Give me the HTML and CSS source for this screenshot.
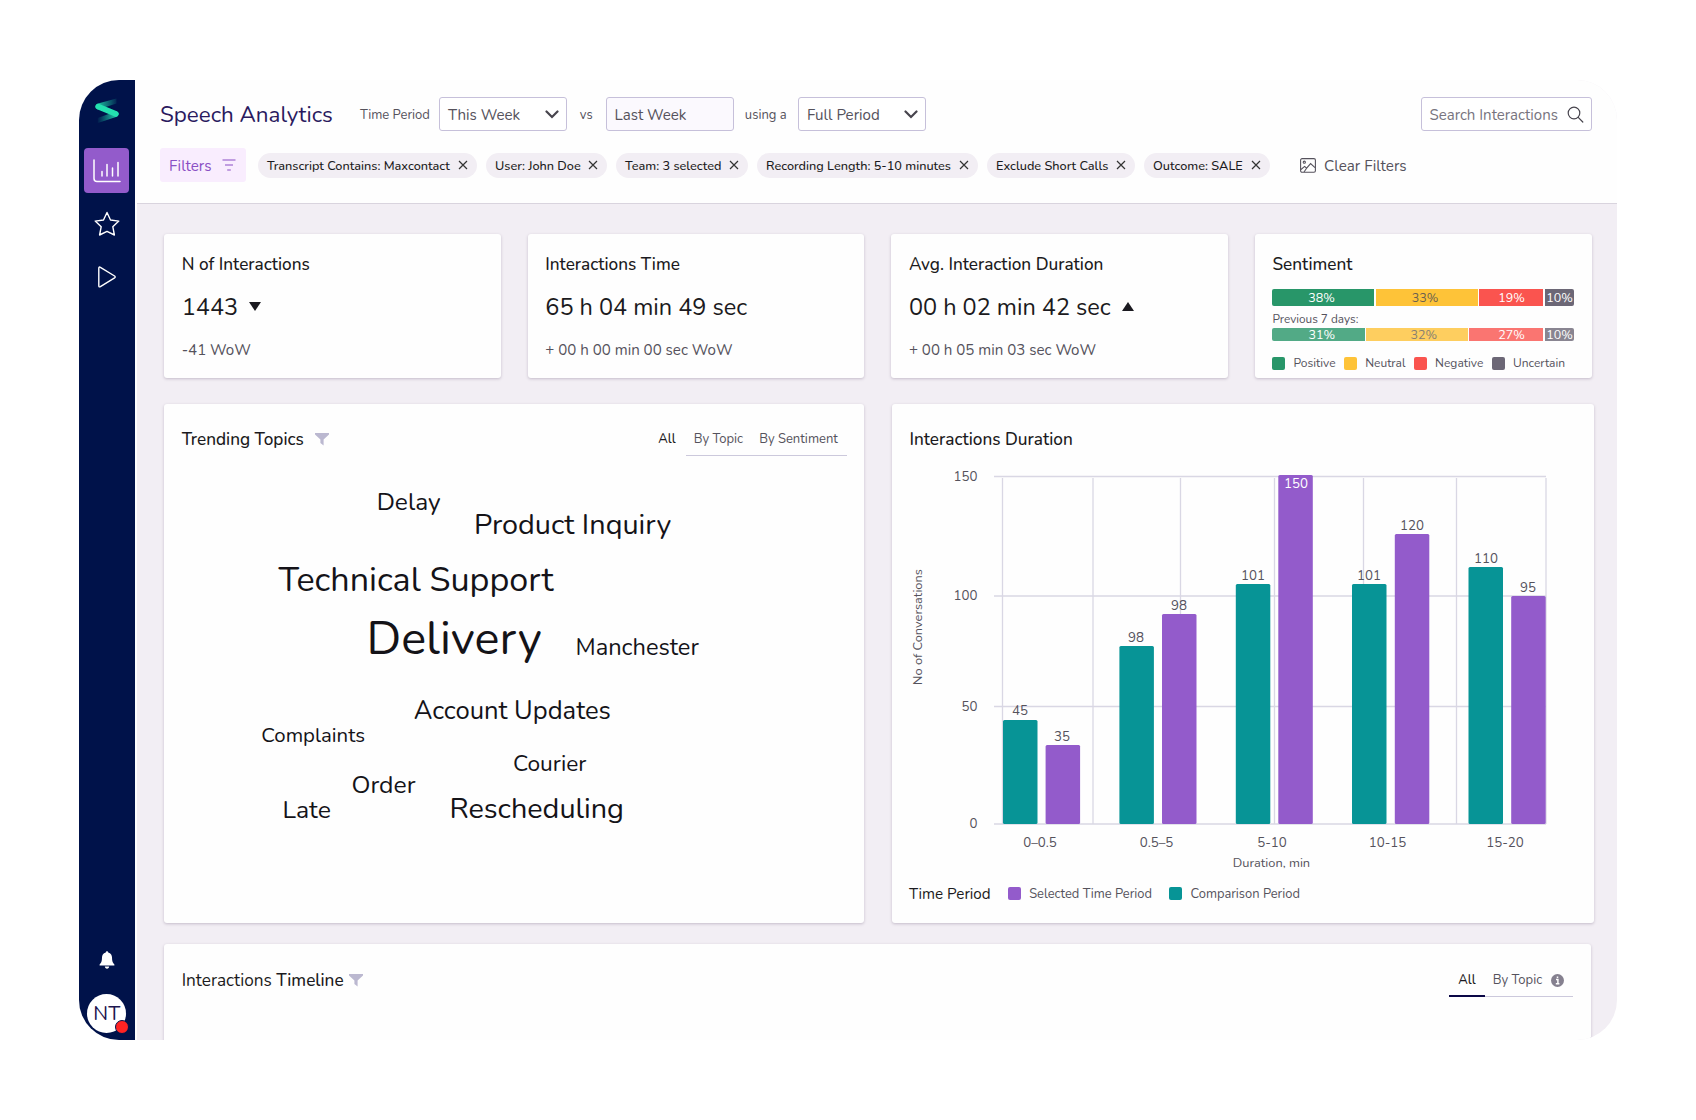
FILE: index.html
```
<!DOCTYPE html>
<html lang="en">
<head>
    <meta charset="UTF-8">
    <meta name="viewport" content="width=device-width, initial-scale=1.0">
    <title>Speech Analytics</title>
    <link rel="stylesheet" href="styles.css">
</head>
<body>

<div class="app">

    <nav class="sidebar">
        <svg class="logo" width="24" height="26" viewBox="0 0 24 26">
            <defs>
                <linearGradient id="g1" x1="0" y1="0" x2="1" y2="0">
                    <stop offset="0" stop-color="#1fd3a8"/>
                    <stop offset="1" stop-color="#1fd3a8" stop-opacity="0.1"/>
                </linearGradient>
                <linearGradient id="g2" x1="0" y1="0" x2="1" y2="0">
                    <stop offset="0" stop-color="#1fd3a8" stop-opacity="0.05"/>
                    <stop offset="1" stop-color="#22dcb0"/>
                </linearGradient>
            </defs>
            <path d="M3 5.5 L21.5 0.5 L21.5 5.5 L3 11.5 C-0.3 10.5 -0.3 6.5 3 5.5Z" fill="url(#g1)"/>
            <path d="M2.8 20 L21 13.2 C24.5 14.2 24.5 18 21 19 L2.8 25Z" fill="url(#g2)"/>
            <path d="M3.2 8.6 L20.8 15.8" stroke="#24e0b0" stroke-width="5.6" stroke-linecap="round"/>
        </svg>

        <a class="nav-item active">
            <svg width="28" height="24" viewBox="0 0 28 24" fill="none" stroke="#fff" stroke-linecap="round">
                <path d="M1 1V19.5Q1 22.5 4 22.5H27" stroke-width="1.5"/>
                <path d="M9 12.5V17M14 5.5V17M19.5 9V17M25 3.5V17" stroke-width="1.5"/>
            </svg>
        </a>
        <a class="nav-item">
            <svg width="26" height="26" viewBox="0 0 26 26" fill="none" stroke="#fff" stroke-width="1.4" stroke-linejoin="round">
                <path d="M13 1.5L16.5 9L24.8 10.1L18.8 15.7L20.4 24L13 20.4L5.6 24L7.2 15.7L1.2 10.1L9.5 9Z"/>
            </svg>
        </a>
        <a class="nav-item">
            <svg width="20" height="24" viewBox="0 0 20 24" fill="none" stroke="#fff" stroke-width="1.4" stroke-linejoin="round">
                <path d="M1.8 3.2Q1.8 1.4 3.4 2.3L17.6 11Q18.8 12 17.6 12.8L3.4 21.6Q1.8 22.4 1.8 20.8Z"/>
            </svg>
        </a>

        <div class="sidebar-bottom">
            <svg width="16" height="18" viewBox="0 0 16 18" fill="#fff">
                <path d="M8 0.3C8.9 0.3 9.2 1 9.2 1.6C12 2.2 13 4.4 13 6.6C13 10.5 13.9 12.2 15.4 13.4V14.6H0.6V13.4C2.1 12.2 3 10.5 3 6.6C3 4.4 4 2.2 6.8 1.6C6.8 1 7.1 0.3 8 0.3Z"/>
                <path d="M5.8 15.6H10.2C10 17 9.2 17.7 8 17.7C6.8 17.7 6 17 5.8 15.6Z"/>
            </svg>
            <div class="avatar">NT<span class="status"></span></div>
        </div>
    </nav>

    <div class="main">

        <header class="header">
            <div class="period-row">
                <h1>Speech Analytics</h1>
                <span class="label">Time Period</span>
                <div class="select">This Week
                    <svg width="14" height="9" viewBox="0 0 14 9"><path d="M1.5 1.5L7 7L12.5 1.5"/></svg>
                </div>
                <span class="label center">vs</span>
                <div class="select disabled">Last Week</div>
                <span class="label center">using a</span>
                <div class="select">Full Period
                    <svg width="14" height="9" viewBox="0 0 14 9"><path d="M1.5 1.5L7 7L12.5 1.5"/></svg>
                </div>
                <div class="select search">Search Interactions
                    <svg width="17" height="17" viewBox="0 0 17 17"><circle cx="7" cy="7" r="5.8"/><path d="M11.2 11.4L15.8 16"/></svg>
                </div>
            </div>

            <div class="filter-row">
                <div class="filters-btn">Filters
                    <svg width="14" height="12" viewBox="0 0 14 12"><path d="M0.5 1H13.5M3 6H11M5.2 11H8.8"/></svg>
                </div>
                <div class="chip c1"><span>Transcript Contains: Maxcontact</span><svg width="10" height="10" viewBox="0 0 10 10"><path d="M1 1L9 9M9 1L1 9"/></svg></div>
                <div class="chip c2"><span>User: John Doe</span><svg width="10" height="10" viewBox="0 0 10 10"><path d="M1 1L9 9M9 1L1 9"/></svg></div>
                <div class="chip c3"><span>Team: 3 selected</span><svg width="10" height="10" viewBox="0 0 10 10"><path d="M1 1L9 9M9 1L1 9"/></svg></div>
                <div class="chip c4"><span>Recording Length: 5-10 minutes</span><svg width="10" height="10" viewBox="0 0 10 10"><path d="M1 1L9 9M9 1L1 9"/></svg></div>
                <div class="chip c5"><span>Exclude Short Calls</span><svg width="10" height="10" viewBox="0 0 10 10"><path d="M1 1L9 9M9 1L1 9"/></svg></div>
                <div class="chip c6"><span>Outcome: SALE</span><svg width="10" height="10" viewBox="0 0 10 10"><path d="M1 1L9 9M9 1L1 9"/></svg></div>
                <div class="clear">
                    <svg width="16" height="15" viewBox="0 0 16 15">
                        <rect x="0.6" y="0.6" width="14.8" height="13.6" rx="1.5"/>
                        <circle cx="4.3" cy="4.2" r="1.1"/>
                        <path d="M1 11.5L4.6 8.4L6.6 10.2L10.6 5.6L15 9.6M4 14L6.6 10.2"/>
                    </svg>
                    Clear Filters
                </div>
            </div>
        </header>

        <div class="content">

            <div class="stats">
                <div class="card stat">
                    <h2>N of Interactions</h2>
                    <p class="value">1443 <i class="down"></i></p>
                    <p class="wow">-41 WoW</p>
                </div>
                <div class="card stat">
                    <h2>Interactions Time</h2>
                    <p class="value">65 h 04 min 49 sec</p>
                    <p class="wow">+ 00 h 00 min 00 sec WoW</p>
                </div>
                <div class="card stat">
                    <h2>Avg. Interaction Duration</h2>
                    <p class="value">00 h 02 min 42 sec <i class="up"></i></p>
                    <p class="wow">+ 00 h 05 min 03 sec WoW</p>
                </div>
                <div class="card stat">
                    <h2>Sentiment</h2>
                    <div class="sentiment current">
                        <span class="positive">38%</span>
                        <span class="neutral">33%</span>
                        <span class="negative">19%</span>
                        <span class="uncertain">10%</span>
                    </div>
                    <p class="previous-label">Previous 7 days:</p>
                    <div class="sentiment previous">
                        <span class="positive">31%</span>
                        <span class="neutral">32%</span>
                        <span class="negative">27%</span>
                        <span class="uncertain">10%</span>
                    </div>
                    <ul class="legend">
                        <li><i class="positive"></i>Positive</li>
                        <li><i class="neutral"></i>Neutral</li>
                        <li><i class="negative"></i>Negative</li>
                        <li><i class="uncertain"></i>Uncertain</li>
                    </ul>
                </div>
            </div>

            <div class="panels">
                <div class="card panel">
                    <div class="panel-head">
                        <h2>Trending Topics</h2>
                        <svg class="funnel" width="14" height="13" viewBox="0 0 14 13"><path d="M0 0H14V1.4L8.6 6.6V12.4L5.4 10V6.6L0 1.4Z"/></svg>
                        <div class="tabs">
                            <span class="tab all">All</span>
                            <div class="tab-line">
                                <span class="tab">By Topic</span>
                                <span class="tab">By Sentiment</span>
                            </div>
                        </div>
                    </div>
                    <!-- word cloud, size by number of mentions -->
                    <svg class="cloud" width="700" height="400" viewBox="164 460 700 400">
                        <text x="376.7" y="510" font-size="24.5">Delay</text>
                        <text x="474" y="534" font-size="28.8">Product Inquiry</text>
                        <text x="278.5" y="591" font-size="34.1">Technical Support</text>
                        <text x="366.5" y="654" font-size="46.8">Delivery</text>
                        <text x="575.5" y="655" font-size="23.6">Manchester</text>
                        <text x="413.7" y="719" font-size="25.6">Account Updates</text>
                        <text x="261.3" y="741.5" font-size="20.4">Complaints</text>
                        <text x="513" y="771" font-size="22.7">Courier</text>
                        <text x="351.5" y="792.5" font-size="24.7">Order</text>
                        <text x="282.5" y="818" font-size="24.8">Late</text>
                        <text x="449.5" y="818" font-size="28.8">Rescheduling</text>
                    </svg>
                </div>

                <div class="card panel">
                    <div class="panel-head">
                        <h2>Interactions Duration</h2>
                    </div>
                    <svg class="chart" width="702" height="416" viewBox="892 460 702 416">
                        <g class="grid">
                            <path d="M994 476.5H1546M994 596H1546M994 706.5H1546M994 824H1546"/>
                            <path d="M1002.5 478V824M1093 478V824M1180.5 478V824M1274.5 478V824M1363.5 478V824M1456.5 478V824M1546 478V824"/>
                        </g>
                        <g class="comparison">
                            <rect x="1003" y="720" width="34.5" height="104" rx="1.5"/>
                            <rect x="1119.4" y="646" width="34.5" height="178" rx="1.5"/>
                            <rect x="1235.8" y="584" width="34.5" height="240" rx="1.5"/>
                            <rect x="1352" y="584" width="34.5" height="240" rx="1.5"/>
                            <rect x="1468.5" y="567" width="34.5" height="257" rx="1.5"/>
                        </g>
                        <g class="selected">
                            <rect x="1045.6" y="745" width="34.5" height="79" rx="1.5"/>
                            <rect x="1162" y="614" width="34.5" height="210" rx="1.5"/>
                            <rect x="1278.3" y="475" width="34.5" height="349" rx="1.5"/>
                            <rect x="1394.8" y="534" width="34.5" height="290" rx="1.5"/>
                            <rect x="1511.2" y="596" width="34.5" height="228" rx="1.5"/>
                        </g>
                        <g class="values">
                            <text x="1020" y="715">45</text>
                            <text x="1062" y="741">35</text>
                            <text x="1136" y="641.5">98</text>
                            <text x="1179" y="609.5">98</text>
                            <text x="1253" y="579.5">101</text>
                            <text x="1296" y="488" class="inside">150</text>
                            <text x="1369" y="579.5">101</text>
                            <text x="1412" y="529.5">120</text>
                            <text x="1486" y="563">110</text>
                            <text x="1528" y="591.5">95</text>
                        </g>
                        <g class="y-axis">
                            <text x="977.5" y="480.5">150</text>
                            <text x="977.5" y="600">100</text>
                            <text x="977.5" y="710.5">50</text>
                            <text x="977.5" y="827.5">0</text>
                        </g>
                        <g class="values">
                            <text x="1040" y="846.5">0–0.5</text>
                            <text x="1156.5" y="846.5">0.5–5</text>
                            <text x="1272" y="846.5">5-10</text>
                            <text x="1387.5" y="846.5">10-15</text>
                            <text x="1505" y="846.5">15-20</text>
                            <text class="axis-title" x="1271.5" y="866.5">Duration, min</text>
                            <text class="axis-title" transform="translate(922 627) rotate(-90)">No of Conversations</text>
                        </g>
                    </svg>
                    <div class="chart-legend">
                        <strong>Time Period</strong>
                        <i class="sel"></i>Selected Time Period
                        <i class="comp"></i>Comparison Period
                    </div>
                </div>
            </div>

            <div class="card timeline">
                <div class="panel-head">
                    <h2><span>Interactions</span> Timeline</h2>
                    <svg class="funnel" width="14" height="13" viewBox="0 0 14 13"><path d="M0 0H14V1.4L8.6 6.6V12.4L5.4 10V6.6L0 1.4Z"/></svg>
                    <div class="tabs">
                        <span class="tab all current-tab">All</span>
                        <div class="tab-line">
                            <span class="tab">By Topic</span>
                            <svg width="13" height="13" viewBox="0 0 13 13"><circle cx="6.5" cy="6.5" r="6.5" fill="#85808f"/><path d="M6.5 2.4V4M5 5.6H6.9V9.8M4.8 9.8H8.4" stroke="#fff" stroke-width="1.5" fill="none"/></svg>
                        </div>
                    </div>
                </div>
            </div>

        </div>
    </div>
</div>

</body>
</html>
```
FILE: styles.css
```
:root {
    --navy: #00124a;
    --purple: #935bcb;
    --teal: #079496;
    --text: #1b1a20;
    --muted: #55525c;
    --line: #d9d7e4;
}

* {
    box-sizing: border-box;
}

body {
    margin: 0;
    padding: 80px 79px;
    background: #fff;
    font-family: 'Nunito', 'Lato', sans-serif;
    font-size: 13px;
    color: var(--muted);
}

h1, h2, p, ul {
    margin: 0;
    padding: 0;
}

.app {
    display: flex;
    width: 1538px;
    height: 960px;
    border-radius: 40px;
    overflow: hidden;
}

/* Sidebar */
.sidebar {
    width: 55.5px;
    background: var(--navy);
    display: flex;
    flex-direction: column;
    align-items: center;
    padding-top: 18px;
    flex-shrink: 0;
}

.logo {
    margin-bottom: 24px;
}

.nav-item {
    width: 45px;
    height: 45px;
    margin-bottom: 8px;
    display: flex;
    align-items: center;
    justify-content: center;
    border-radius: 4px;
}

.nav-item.active {
    background: var(--purple);
}

.sidebar-bottom {
    margin-top: auto;
    display: flex;
    flex-direction: column;
    align-items: center;
    gap: 25px;
    padding-bottom: 7.5px;
}

.avatar {
    position: relative;
    width: 39px;
    height: 39px;
    border-radius: 50%;
    background: #fff;
    color: #1d1650;
    font-size: 20px;
    line-height: 39px;
    text-align: center;
}

.status {
    position: absolute;
    right: -3px;
    bottom: -1px;
    width: 14px;
    height: 14px;
    border-radius: 50%;
    background: #ff2323;
    border: 1.5px solid var(--navy);
}

/* Header */
.main {
    flex: 1;
    border-left: 2px solid #fefefe;
    background: #f2eef4;
}

.header {
    height: 124px;
    padding: 17px 26px 0 23.5px;
    background: #fefefe;
    border-bottom: 1px solid #d9d4de;
}

.period-row {
    display: grid;
    grid-template-columns: 200px 79px 128px 38.5px 128px 64.5px 128px 170px;
    align-items: center;
}

h1 {
    padding-top: 1px;
    font-size: 22.4px;
    line-height: 32px;
    font-weight: 400;
    color: #2a1a5e;
}

.label {
    padding-top: 1px;
}

.center {
    text-align: center;
}

.select {
    height: 34px;
    padding: 1px 7px 0 8px;
    display: flex;
    align-items: center;
    justify-content: space-between;
    border: 1px solid #c6c0da;
    border-radius: 3px;
    font-size: 15.1px;
    background: #fff;
    white-space: nowrap;
}

.select svg {
    fill: none;
    stroke: #47444d;
    stroke-width: 2.2;
    stroke-linecap: round;
}

.select.disabled {
    background: #fbf9fe;
}

.search {
    margin-left: 495px;
    width: 170.5px;
    padding-left: 7.5px;
    padding-right: 6.5px;
    color: #77747e;
    font-size: 15px;
}

.search svg {
    stroke-width: 1.2;
}

.filter-row {
    display: flex;
    align-items: center;
    gap: 9px;
    margin-top: 17px;
}

.filters-btn {
    width: 86px;
    height: 34px;
    margin-right: 3px;
    padding: 1px 10px 0 9px;
    display: flex;
    align-items: center;
    justify-content: space-between;
    background: #f9edfe;
    border-radius: 3px;
    color: #8a4fc4;
    font-size: 15.2px;
}

.filters-btn svg {
    margin-top: -2px;
    stroke: #8a4fc4;
    stroke-width: 1.1;
}

.chip {
    height: 25px;
    padding: 0 9px;
    display: flex;
    align-items: center;
    justify-content: space-between;
    border-radius: 13px;
    background: #f2eef4;
    color: #1b1a20;
    font-size: 12.7px;
    font-weight: 500;
    white-space: nowrap;
}

.chip svg {
    stroke: #333;
    stroke-width: 1.2;
}

.c1 { width: 219px; }
.c2 { width: 121px; }
.c3 { width: 132px; }
.c4 { width: 221px; }
.c5 { width: 148px; }
.c6 { width: 126px; }

.clear {
    display: flex;
    align-items: center;
    gap: 8px;
    margin-left: 21px;
    padding-top: 1px;
    font-size: 15.2px;
}

.clear svg {
    margin-top: -1px;
    fill: none;
    stroke: #55525c;
    stroke-width: 1.1;
}

/* Cards */
.content {
    padding: 30px 0 0 27.7px;
}

.card {
    background: #fefefe;
    border-radius: 3px;
    box-shadow: 0 1px 3px rgba(60, 40, 80, 0.25);
}

h2 {
    font-size: 17.2px;
    line-height: 21px;
    font-weight: 550;
    color: var(--text);
}

.stats {
    display: grid;
    grid-template-columns: repeat(4, 336.6px);
    gap: 27px;
}

.stat {
    height: 144px;
    padding: 20px 17.5px 0;
}

.value {
    margin-top: 18px;
    font-size: 23.5px;
    line-height: 29px;
    color: var(--text);
}

.value i {
    display: inline-block;
    margin-left: 5px;
    vertical-align: 4px;
    border: 6.5px solid transparent;
}

.value .down {
    border-top: 9px solid var(--text);
    border-bottom: 0;
}

.value .up {
    border-bottom: 9px solid var(--text);
    border-top: 0;
}

.wow {
    margin-top: 18px;
    font-size: 15.1px;
    line-height: 20px;
}

.positive { background: #289669; }
.neutral { background: #fec338; }
.negative { background: #fa544f; }
.uncertain { background: #6c6776; }

.sentiment {
    display: grid;
    gap: 1.5px;
    width: 302.5px;
    color: #fff;
    font-size: 12.5px;
    text-align: center;
}

.sentiment .positive { border-radius: 2px 0 0 2px; }
.sentiment .uncertain { border-radius: 0 2px 2px 0; }

.current {
    margin-top: 14px;
    height: 17px;
    line-height: 17px;
    grid-template-columns: 102px 102px 64px 29px;
}

.current .positive,
.current .neutral {
    padding-right: 4px;
}

.previous {
    height: 13px;
    line-height: 13px;
    grid-template-columns: 92.5px 101.5px 74px 29px;
}

.previous span {
    opacity: 0.8;
}

.previous .positive { padding-left: 6px; }
.previous .neutral { padding-left: 13px; }
.previous .negative { padding-left: 10px; }

.sentiment .neutral {
    color: #6a5f50;
}

.previous-label {
    margin-top: 5px;
    font-size: 11.8px;
    line-height: 17px;
}

.legend {
    display: flex;
    list-style: none;
    margin-top: 15px;
    font-size: 12px;
    line-height: 15px;
    gap: 8.6px;
}

.legend li {
    display: flex;
    align-items: center;
}

.legend i {
    width: 13px;
    height: 13px;
    border-radius: 2px;
    margin-right: 8px;
}

/* Panels */
.panels {
    display: grid;
    grid-template-columns: 700.2px 702px;
    gap: 27.6px;
    margin-top: 26px;
}

.panel {
    height: 519px;
}

.panel-head {
    display: flex;
    height: 56px;
    padding: 25px 17.5px 0;
}

.funnel {
    margin: 4px 0 0 11px;
    fill: #bbb8d0;
}

.tabs {
    display: flex;
    margin-left: auto;
    line-height: 20px;
}

.tab-line {
    display: flex;
    gap: 16px;
    height: 27px;
    padding: 0 9px 0 8px;
    border-bottom: 1px solid #ccc9dc;
}

.all {
    padding: 0 10px;
    color: var(--text);
    font-weight: 500;
}

.cloud {
    display: block;
    fill: #141318;
}

.chart {
    display: block;
}

.grid path {
    fill: none;
    stroke: var(--line);
    stroke-width: 1.3;
}

.comparison {
    fill: var(--teal);
}

.selected {
    fill: var(--purple);
}

.values, .y-axis {
    fill: var(--muted);
    font-size: 13.3px;
    text-anchor: middle;
}

.y-axis {
    text-anchor: end;
}

.axis-title {
    font-size: 12.8px;
}

.values text[transform] {
    text-anchor: middle;
}

.inside {
    fill: #fff;
}

.chart-legend {
    display: flex;
    align-items: center;
    padding: 7.5px 17px;
    line-height: 20px;
    font-size: 12.9px;
}

.chart-legend strong {
    font-weight: 400;
    font-size: 15.2px;
    color: var(--text);
}

.chart-legend i {
    width: 13px;
    height: 13px;
    margin: 0 8px 0 17.5px;
    border-radius: 2px;
}

.sel {
    background: var(--purple);
}

.comp {
    background: var(--teal);
}

.timeline {
    width: 1426.5px;
    height: 120px;
    margin-top: 21px;
}

.timeline .panel-head {
    padding-top: 25.5px;
}

.timeline h2 span {
    font-weight: 400;
}

.timeline .funnel {
    margin-left: 5px;
}

.timeline .tab-line svg {
    margin: 4px 0 0 -7px;
}

.timeline .tab-line {
    padding-left: 8px;
}

.current-tab {
    height: 27px;
    padding: 0 9px;
    border-bottom: 2px solid #0b0746;
}
```
